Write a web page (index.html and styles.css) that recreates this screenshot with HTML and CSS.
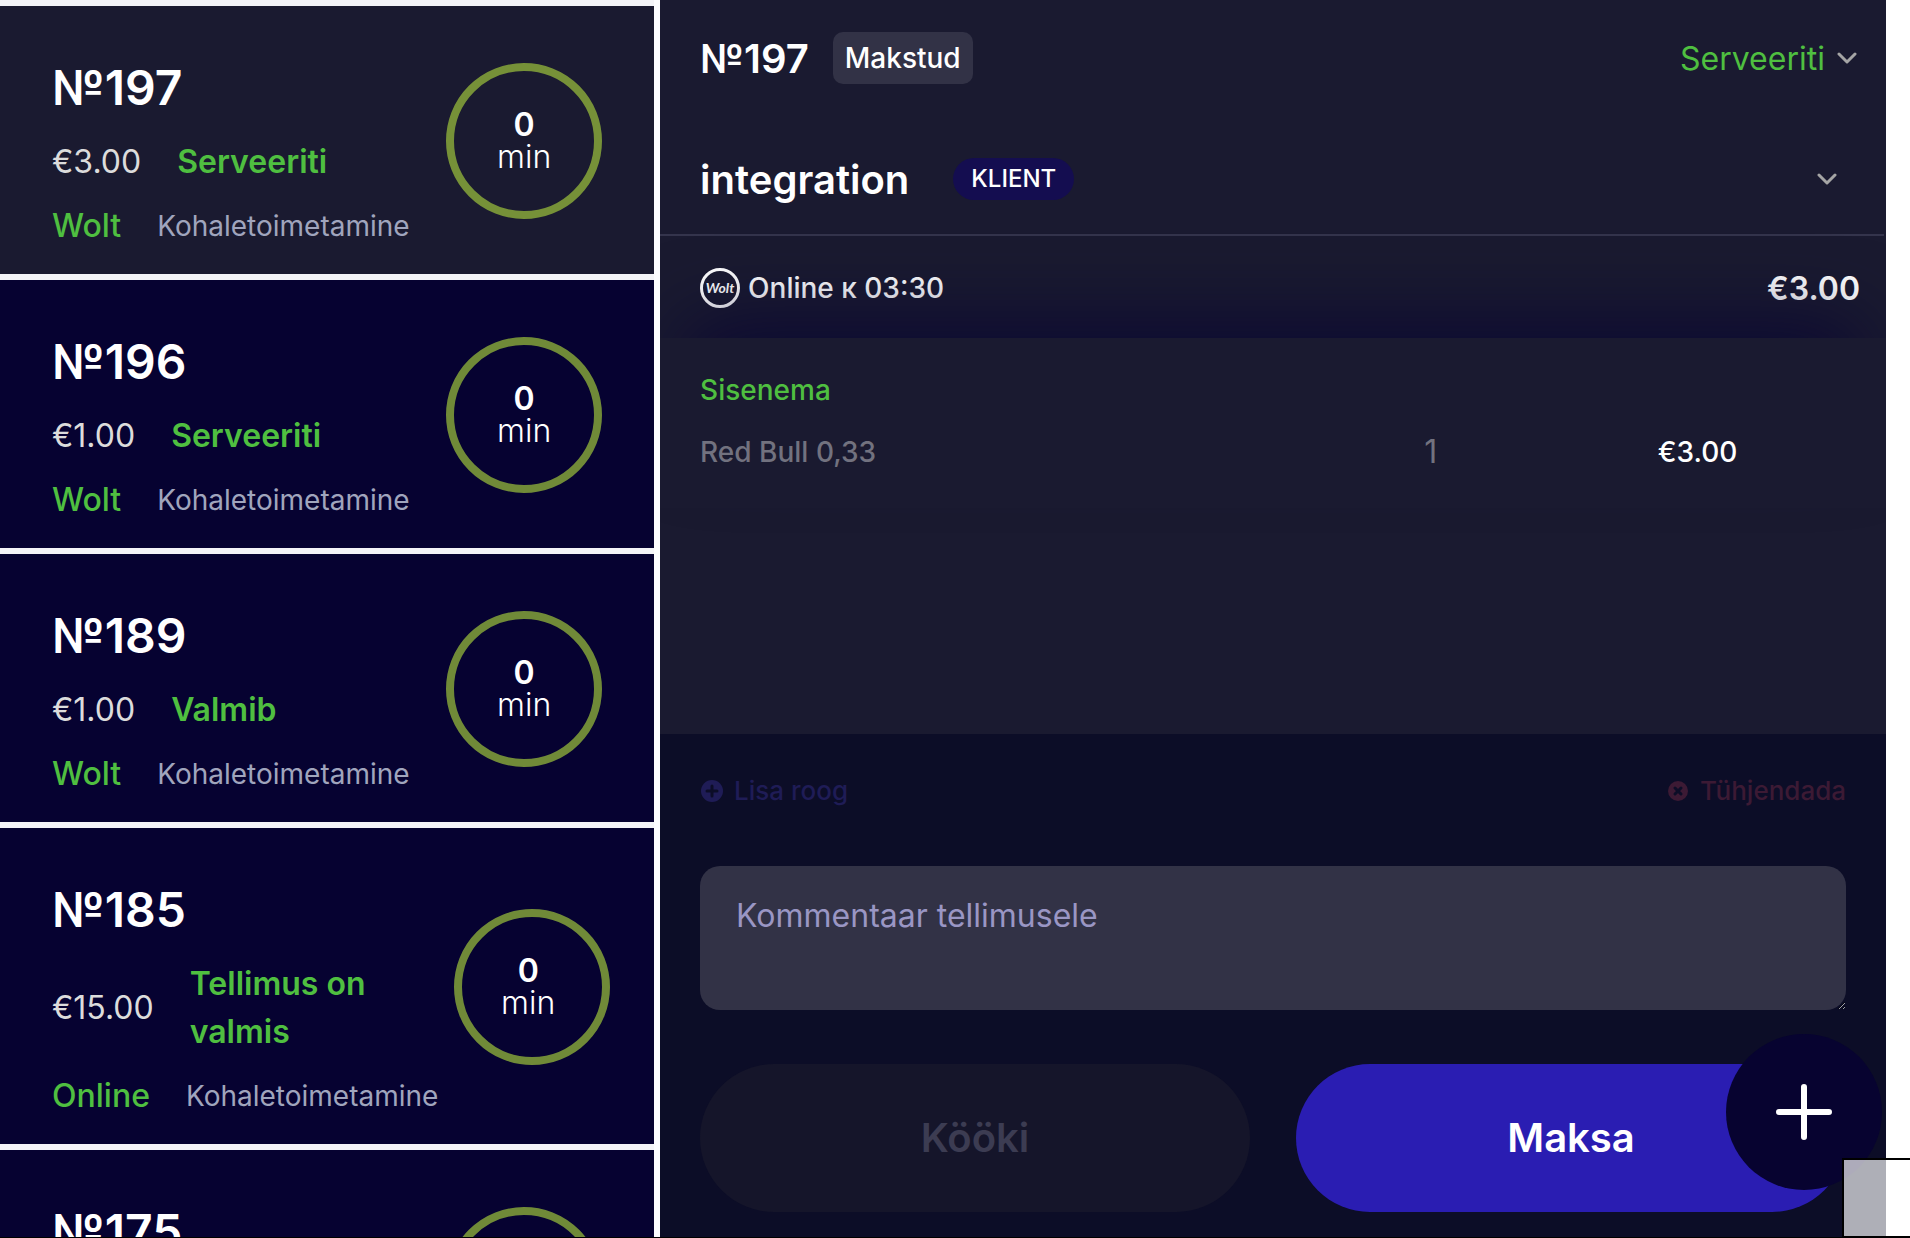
FILE: index.html
```html
<!DOCTYPE html>
<html lang="et">
<head>
  <meta charset="UTF-8">
  <meta name="viewport" content="width=device-width, initial-scale=1.0">
  <title>Tellimused</title>
  <link rel="stylesheet" href="styles.css">
</head>
<body>
  <div class="layout">
    <aside class="orders">
      <article class="card active">
        <div class="info">
          <h2>№197</h2>
          <div class="row"><span class="price">€3.00</span><span class="status">Serveeriti</span></div>
          <div class="row source"><span class="channel">Wolt</span><span class="type">Kohaletoimetamine</span></div>
        </div>
        <div class="timer">
          <svg class="ring" viewBox="0 0 156 156"><circle cx="78" cy="78" r="74"/></svg>
          <div class="time"><b>0</b><span>min</span></div>
        </div>
      </article>
      <article class="card">
        <div class="info">
          <h2>№196</h2>
          <div class="row"><span class="price">€1.00</span><span class="status">Serveeriti</span></div>
          <div class="row source"><span class="channel">Wolt</span><span class="type">Kohaletoimetamine</span></div>
        </div>
        <div class="timer">
          <svg class="ring" viewBox="0 0 156 156"><circle cx="78" cy="78" r="74"/></svg>
          <div class="time"><b>0</b><span>min</span></div>
        </div>
      </article>
      <article class="card">
        <div class="info">
          <h2>№189</h2>
          <div class="row"><span class="price">€1.00</span><span class="status">Valmib</span></div>
          <div class="row source"><span class="channel">Wolt</span><span class="type">Kohaletoimetamine</span></div>
        </div>
        <div class="timer">
          <svg class="ring" viewBox="0 0 156 156"><circle cx="78" cy="78" r="74"/></svg>
          <div class="time"><b>0</b><span>min</span></div>
        </div>
      </article>
      <article class="card">
        <div class="info">
          <h2>№185</h2>
          <div class="row"><span class="price">€15.00</span><span class="status">Tellimus on valmis</span></div>
          <div class="row source"><span class="channel">Online</span><span class="type">Kohaletoimetamine</span></div>
        </div>
        <div class="timer">
          <svg class="ring" viewBox="0 0 156 156"><circle cx="78" cy="78" r="74"/></svg>
          <div class="time"><b>0</b><span>min</span></div>
        </div>
      </article>
      <article class="card">
        <div class="info">
          <h2>№175</h2>
          <div class="row"><span class="price">€3.00</span><span class="status">Serveeriti</span></div>
          <div class="row source"><span class="channel">Wolt</span><span class="type">Kohaletoimetamine</span></div>
        </div>
        <div class="timer">
          <svg class="ring" viewBox="0 0 156 156"><circle cx="78" cy="78" r="74"/></svg>
          <div class="time"><b>0</b><span>min</span></div>
        </div>
      </article>
    </aside>

    <main class="order">
      <header class="order-head">
        <h1>№197</h1>
        <span class="paid">Makstud</span>
        <label class="state">
          <select aria-label="Olek">
            <option>Serveeriti</option>
            <option>Valmib</option>
          </select>
          <svg class="chevron" viewBox="0 0 20 12"><path d="M2 2l8 8 8-8"/></svg>
        </label>
      </header>

      <div class="client">
        <h2>integration</h2>
        <span class="client-tag">KLIENT</span>
        <button class="toggle" type="button" aria-label="Ava klient">
          <svg class="chevron" viewBox="0 0 20 12"><path d="M2 2l8 8 8-8"/></svg>
        </button>
      </div>

      <div class="summary">
        <svg class="wolt" viewBox="0 0 40 40">
          <circle cx="20" cy="20" r="18.5"/>
          <text x="20" y="25" text-anchor="middle">Wolt</text>
        </svg>
        <span class="pickup">Online к 03:30</span>
        <span class="total">€3.00</span>
      </div>

      <section class="items">
        <h3>Sisenema</h3>
        <table>
          <tbody>
            <tr>
              <td class="name">Red Bull 0,33</td>
              <td class="qty">1</td>
              <td class="sum">€3.00</td>
              <td></td>
            </tr>
          </tbody>
        </table>
      </section>

      <footer class="order-foot">
        <div class="actions">
          <button class="link add" type="button" disabled>
            <svg viewBox="0 0 24 24"><circle cx="12" cy="12" r="11"/><path d="M12 7v10M7 12h10"/></svg>
            Lisa roog
          </button>
          <button class="link clear" type="button" disabled>
            <svg viewBox="0 0 24 24"><circle cx="12" cy="12" r="10"/><path d="M9 9l6 6M15 9l-6 6"/></svg>
            Tühjendada
          </button>
        </div>
        <textarea class="comment" aria-label="Kommentaar tellimusele" placeholder="Kommentaar tellimusele"></textarea>
        <div class="buttons">
          <button class="btn kitchen" type="button" disabled>Kööki</button>
          <button class="btn pay" type="button">Maksa</button>
        </div>
      </footer>

      <button class="fab" type="button" aria-label="Uus tellimus">
        <svg viewBox="0 0 56 56"><path d="M28 3v50M3 28h50"/></svg>
      </button>
    </main>
  </div>
  <div class="corner"></div>
</body>
</html>
```

FILE: styles.css
```css
* {
  box-sizing: border-box;
}
body {
  margin: 0;
  height: 100vh;
  overflow: hidden;
  position: relative;
  background: #fff;
  color: #fff;
  font-family: Inter, "Liberation Sans", sans-serif;
  font-size: 28px;
}
h1, h2, h3 {
  margin: 0;
  font-weight: 600;
}
button, select, textarea {
  font: inherit;
  border: none;
}
button {
  cursor: pointer;
}
.layout {
  display: grid;
  grid-template-columns: 35% 1fr;
  height: 100vh;
  padding-right: 24px;
  border-bottom: 1px solid #000;
}

/* order list */
.orders {
  display: flex;
  flex-direction: column;
  gap: 6px;
  padding-top: 6px;
  overflow: hidden;
  background: #f4f4f8;
  border-right: 6px solid #fdfdff;
}
.card {
  display: flex;
  flex-shrink: 0;
  justify-content: space-between;
  align-items: center;
  gap: 16px;
  padding: 48px 52px 24px;
  background: #060231;
}
.card.active {
  background: #1a1a30;
}
.info {
  flex-shrink: 2;
}
.card h2 {
  font-size: 48px;
  line-height: 68px;
}
.row {
  display: flex;
  align-items: center;
  gap: 36px;
  margin-top: 16px;
  font-size: 32px;
  line-height: 48px;
}
.price {
  font-weight: 400;
  color: #dcdcdc;
}
.status {
  font-weight: 600;
  color: #4fbf40;
}
.channel {
  font-weight: 500;
  color: #4fbf40;
}
.type {
  font-size: 28px;
  color: #a0a5bd;
}
.timer {
  position: relative;
  flex: 0 1 156px;
  min-width: 0;
  margin-top: -22px;
}
.ring {
  display: block;
  width: 156px;
  height: 156px;
  fill: none;
  stroke: rgba(158, 197, 60, 0.7);
  stroke-width: 8;
}
.time {
  position: absolute;
  inset: 0;
  display: flex;
  flex-direction: column;
  align-items: center;
  justify-content: center;
  font-size: 32px;
  line-height: 32px;
  font-weight: 300;
}
.time b {
  font-weight: 600;
}

/* order details */
.order {
  position: relative;
  display: flex;
  flex-direction: column;
  overflow: hidden;
  background: #1a1a30;
}
.order-head {
  display: flex;
  align-items: center;
  height: 116px;
  padding: 0 29px 0 40px;
}
.order-head h1 {
  font-size: 40px;
}
.paid {
  margin-left: 24px;
  padding: 0 12px;
  line-height: 52px;
  border-radius: 10px;
  background: #323246;
  font-weight: 500;
}
.state {
  display: flex;
  align-items: center;
  gap: 12px;
  margin-left: auto;
}
.state select {
  appearance: none;
  padding: 0;
  background: transparent;
  color: #4fbf40;
  font-size: 32px;
}
.chevron {
  display: block;
  width: 20px;
  height: 12px;
  fill: none;
  stroke: #a5a5a5;
  stroke-width: 3;
  stroke-linecap: round;
  stroke-linejoin: round;
}
.client {
  display: flex;
  align-items: center;
  height: 120px;
  margin-right: 2px;
  padding: 8px 47px 0 40px;
  border-bottom: 2px solid #34344c;
}
.client h2 {
  font-size: 40px;
}
.client-tag {
  margin-left: 44px;
  padding: 0 18px;
  line-height: 42px;
  border-radius: 21px;
  background: #140d50;
  font-size: 24px;
  font-weight: 500;
}
.toggle {
  margin-left: auto;
  padding: 0;
  background: none;
}
.summary {
  display: flex;
  align-items: center;
  height: 102px;
  padding: 2px 26px 0 40px;
}
.wolt {
  width: 40px;
  height: 40px;
  fill: #fff;
}
.wolt circle {
  fill: none;
  stroke: #fff;
  stroke-width: 3;
}
.wolt text {
  font-family: Lato, sans-serif;
  font-size: 14px;
  font-style: italic;
  font-weight: 700;
}
.pickup {
  margin-left: 8px;
  font-weight: 500;
}
.total {
  margin-left: auto;
  font-size: 32px;
  font-weight: 600;
}
.items {
  position: relative;
  padding: 28px 26px 32px 40px;
  background: #1a1a30;
  box-shadow: 0 -40px 80px -30px rgba(6, 2, 51, 0.8);
}
.items h3 {
  line-height: 48px;
  font-size: 28px;
  font-weight: 500;
  color: #4fbf40;
}
.items table {
  width: 100%;
  margin-top: 14px;
  border-collapse: collapse;
  table-layout: fixed;
}
.items td {
  padding: 0;
  line-height: 48px;
}
.items .name {
  width: 52%;
  font-weight: 500;
  color: #72727f;
}
.items .qty {
  width: 22%;
  text-align: center;
  font-size: 32px;
  color: #72727f;
}
.items .sum {
  width: 24%;
  text-align: center;
  font-weight: 500;
}

/* bottom part: comment and buttons */
.order-foot {
  margin-top: auto;
  padding: 36px 40px 25px;
  background: #0c0d27;
}
.actions {
  display: flex;
  justify-content: space-between;
}
.link {
  display: flex;
  align-items: center;
  gap: 10px;
  padding: 0;
  background: none;
  font-size: 26px;
  font-weight: 500;
  line-height: 42px;
}
.link svg {
  width: 24px;
  height: 24px;
  fill: currentColor;
}
.link path {
  stroke: #0c0d27;
  stroke-width: 3;
  stroke-linecap: round;
}
.add {
  color: #1f1c56;
}
.clear {
  color: #3c1a34;
}
.comment {
  display: block;
  width: 100%;
  height: 144px;
  margin: 54px 0;
  padding: 26px 36px;
  border-radius: 20px;
  background: #323246;
  color: #fff;
  font-size: 32px;
  line-height: 48px;
}
.comment::placeholder {
  color: #9a96c4;
}
.buttons {
  display: flex;
  gap: 46px;
}
.btn {
  flex: 1;
  height: 148px;
  padding: 0 0 2px;
  border-radius: 74px;
  font-size: 40px;
  font-weight: 600;
}
.kitchen {
  background: #15152a;
  color: #3c3c52;
}
.pay {
  background: #2a1db2;
  color: #fff;
}
.fab {
  position: absolute;
  right: 4px;
  bottom: 47px;
  width: 156px;
  height: 156px;
  padding: 50px;
  border-radius: 50%;
  background: #070330;
}
.fab svg {
  display: block;
  width: 56px;
  height: 56px;
  stroke: #fff;
  stroke-width: 6;
  stroke-linecap: round;
}
.corner {
  position: absolute;
  right: -2px;
  bottom: 0;
  width: 70px;
  height: 80px;
  border: 2px solid #000;
  background: rgba(255, 255, 255, 0.67);
}
```
